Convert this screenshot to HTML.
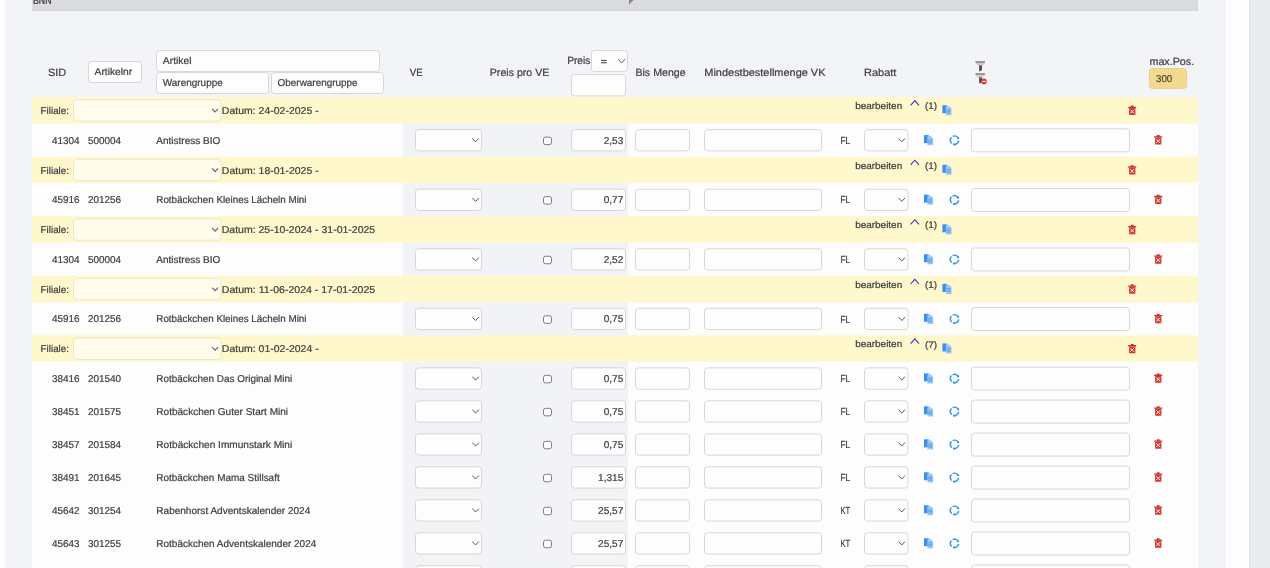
<!DOCTYPE html>
<html><head><meta charset="utf-8"><title>Preise</title>
<style>
html,body{margin:0;padding:0;width:1270px;height:568px;overflow:hidden;background:#f3f4f8;}
svg{display:block;will-change:transform;text-rendering:geometricPrecision;font-family:"Liberation Sans",sans-serif;}
</style></head><body>
<svg width="1270" height="568" viewBox="0 0 1270 568">
<rect x="0.00" y="0.00" width="1270.00" height="568.00" fill="#f3f4f8"/>
<rect x="0.00" y="0.00" width="5.00" height="568.00" fill="#fdfdfe"/>
<rect x="1226.00" y="0.00" width="23.00" height="568.00" fill="#fdfdfe"/>
<rect x="1249.00" y="0.00" width="21.00" height="568.00" fill="#eaebef"/>
<rect x="1249.00" y="0.00" width="1.00" height="568.00" fill="#e2e3e8"/>
<rect x="32.00" y="0.00" width="1166.00" height="11.00" fill="#dadbe0"/>
<rect x="32.00" y="10.00" width="1166.00" height="1.00" fill="#d4d5da"/>
<path d="M629 -1 L634.5 -1 L629 4.5 z" fill="#858585"/>
<text x="33.00" y="3.80" font-size="10.5" fill="#333" text-anchor="start" stroke="#333" stroke-width="0.22" textLength="18.50" lengthAdjust="spacingAndGlyphs">BNN</text>
<text x="48.00" y="76.20" font-size="10.5" fill="#414141" text-anchor="start" stroke="#414141" stroke-width="0.22" textLength="18.30" lengthAdjust="spacingAndGlyphs">SID</text>
<rect x="88.50" y="61.50" width="53.00" height="21.00" rx="3" fill="#fdfdfd" stroke="#d9d6d6" stroke-width="1"/>
<text x="94.60" y="75.00" font-size="10" fill="#414141" text-anchor="start" stroke="#414141" stroke-width="0.22" textLength="37.60" lengthAdjust="spacingAndGlyphs">Artikelnr</text>
<rect x="156.50" y="50.50" width="223.00" height="21.00" rx="3" fill="#fdfdfd" stroke="#d9d6d6" stroke-width="1"/>
<text x="162.80" y="64.00" font-size="10" fill="#414141" text-anchor="start" stroke="#414141" stroke-width="0.22" textLength="28.80" lengthAdjust="spacingAndGlyphs">Artikel</text>
<rect x="156.50" y="72.50" width="112.00" height="21.00" rx="3" fill="#fdfdfd" stroke="#d9d6d6" stroke-width="1"/>
<text x="162.80" y="86.00" font-size="10" fill="#414141" text-anchor="start" stroke="#414141" stroke-width="0.22" textLength="60.00" lengthAdjust="spacingAndGlyphs">Warengruppe</text>
<rect x="271.50" y="72.50" width="112.00" height="21.00" rx="3" fill="#fdfdfd" stroke="#d9d6d6" stroke-width="1"/>
<text x="277.60" y="86.00" font-size="10" fill="#414141" text-anchor="start" stroke="#414141" stroke-width="0.22" textLength="80.00" lengthAdjust="spacingAndGlyphs">Oberwarengruppe</text>
<text x="409.80" y="76.20" font-size="10.5" fill="#414141" text-anchor="start" stroke="#414141" stroke-width="0.22" textLength="12.90" lengthAdjust="spacingAndGlyphs">VE</text>
<text x="489.80" y="76.20" font-size="10.5" fill="#414141" text-anchor="start" stroke="#414141" stroke-width="0.22" textLength="59.50" lengthAdjust="spacingAndGlyphs">Preis pro VE</text>
<text x="567.20" y="64.20" font-size="10.5" fill="#414141" text-anchor="start" stroke="#414141" stroke-width="0.22" textLength="23.20" lengthAdjust="spacingAndGlyphs">Preis</text>
<rect x="591.50" y="50.50" width="36.00" height="21.00" rx="3" fill="#fdfdfd" stroke="#d9d6d6" stroke-width="1"/>
<rect x="601" y="59.9" width="5.6" height="1.1" fill="#4a4a4a"/><rect x="601" y="62.2" width="5.6" height="1.1" fill="#4a4a4a"/>
<path d="M618.20 59.00 L621.60 63.00 L625.00 59.00" fill="none" stroke="#666" stroke-width="1"/>
<rect x="571.50" y="74.50" width="54.00" height="21.40" rx="3" fill="#fdfdfd" stroke="#d9d6d6" stroke-width="1"/>
<text x="635.40" y="76.20" font-size="10.5" fill="#414141" text-anchor="start" stroke="#414141" stroke-width="0.22" textLength="50.30" lengthAdjust="spacingAndGlyphs">Bis Menge</text>
<text x="704.30" y="76.20" font-size="10.5" fill="#414141" text-anchor="start" stroke="#414141" stroke-width="0.22" textLength="121.20" lengthAdjust="spacingAndGlyphs">Mindestbestellmenge VK</text>
<text x="864.00" y="76.20" font-size="10.5" fill="#414141" text-anchor="start" stroke="#414141" stroke-width="0.22" textLength="32.40" lengthAdjust="spacingAndGlyphs">Rabatt</text>
<rect x="975.50" y="61.00" width="9.5" height="2" fill="#999"/>
<path d="M975.50 63.00 h9.5 l-3.2 3.2 h-3.1 z" fill="#c9c9c9"/>
<path d="M979.20 65.60 h2.7 v4.6 l-2.7 1.4 z" fill="#454545"/>
<rect x="975.50" y="73.00" width="9.5" height="2" fill="#999"/>
<path d="M975.50 75.00 h9.5 l-3.2 3.2 h-3.1 z" fill="#c9c9c9"/>
<path d="M979.20 77.60 h2.7 v4.6 l-2.7 1.4 z" fill="#454545"/>
<circle cx="983.9" cy="81.4" r="2.8" fill="#e8322d"/><rect x="982.2" y="80.9" width="3.4" height="1.1" fill="#fff"/>
<text x="1149.50" y="64.50" font-size="10.5" fill="#414141" text-anchor="start" stroke="#414141" stroke-width="0.22" textLength="44.60" lengthAdjust="spacingAndGlyphs">max.Pos.</text>
<rect x="1149.50" y="68.50" width="37.00" height="20.00" rx="3" fill="#f3da8f" stroke="#e8d291" stroke-width="1"/>
<text x="1156.00" y="81.70" font-size="10" fill="#4a4a3a" text-anchor="start" stroke="#4a4a3a" stroke-width="0.22" textLength="16.30" lengthAdjust="spacingAndGlyphs">300</text>
<rect x="32.00" y="97.00" width="1166.00" height="471.00" fill="#fdfdfe"/>
<rect x="403.00" y="97.00" width="225.00" height="471.00" fill="#f2f3f7"/>
<rect x="32.00" y="97.00" width="1166.00" height="26.60" fill="#fff8cd"/>
<text x="40.60" y="114.00" font-size="10" fill="#414141" text-anchor="start" stroke="#414141" stroke-width="0.22" textLength="28.40" lengthAdjust="spacingAndGlyphs">Filiale:</text>
<rect x="73.50" y="99.70" width="147.50" height="21.40" rx="3" fill="#fffcec" stroke="#ede6c6" stroke-width="1"/>
<path d="M212.10 108.85 L215.10 111.95 L218.10 108.85" fill="none" stroke="#6b6b6b" stroke-width="1.2"/>
<text x="221.80" y="114.00" font-size="10" fill="#414141" text-anchor="start" stroke="#414141" stroke-width="0.22" textLength="96.90" lengthAdjust="spacingAndGlyphs">Datum: 24-02-2025 -</text>
<text x="855.20" y="109.00" font-size="9.5" fill="#414141" text-anchor="start" stroke="#414141" stroke-width="0.22" textLength="47.00" lengthAdjust="spacingAndGlyphs">bearbeiten</text>
<path d="M910.6 105.30 L914.8 100.60 L919 105.30" fill="none" stroke="#3a2fc0" stroke-width="1.05"/>
<text x="924.90" y="109.30" font-size="9.5" fill="#414141" text-anchor="start" stroke="#414141" stroke-width="0.22" textLength="12.20" lengthAdjust="spacingAndGlyphs">(1)</text>
<rect x="942.40" y="105.20" width="4.8" height="8" fill="#3a8ff0"/>
<path d="M945.80 106.20 h3.4 l2.3 2.3 v6.8 h-5.7 z" fill="#9ac8f7"/>
<path d="M946.60 109.80 h4 M946.60 111.40 h4 M946.60 113.00 h4" stroke="#5a9de8" stroke-width="0.9"/>
<path d="M1128.20 106.80 h8 v1.3 h-8 z M1130.80 105.60 h2.8 v1.3 h-2.8 z" fill="#c8332b"/>
<path d="M1129.10 108.10 h6.3 v6.4 q0 0.5 -0.5 0.5 h-5.3 q-0.5 0 -0.5 -0.5 z" fill="#d2362c"/>
<path d="M1130.35 109.60 L1134.15 113.40 M1134.15 109.60 L1130.35 113.40" stroke="#fff" stroke-width="1"/>
<text x="79.60" y="143.60" font-size="10" fill="#414141" text-anchor="end" stroke="#414141" stroke-width="0.22" textLength="27.60" lengthAdjust="spacingAndGlyphs">41304</text>
<text x="87.90" y="143.60" font-size="10" fill="#414141" text-anchor="start" stroke="#414141" stroke-width="0.22" textLength="33.10" lengthAdjust="spacingAndGlyphs">500004</text>
<text x="156.30" y="143.60" font-size="10" fill="#414141" text-anchor="start" stroke="#414141" stroke-width="0.22" textLength="64.00" lengthAdjust="spacingAndGlyphs">Antistress BIO</text>
<rect x="415.50" y="129.60" width="66.00" height="21.30" rx="3" fill="#fdfdfd" stroke="#d9d6d6" stroke-width="1"/>
<path d="M472.35 138.35 L475.60 141.85 L478.85 138.35" fill="none" stroke="#5a5a5a" stroke-width="1"/>
<rect x="543.50" y="137.10" width="8.00" height="7.50" rx="2" fill="#fff" stroke="#7a7a7a" stroke-width="1"/>
<rect x="571.50" y="129.60" width="54.00" height="21.30" rx="3" fill="#fdfdfd" stroke="#d9d6d6" stroke-width="1"/>
<text x="623.30" y="143.60" font-size="10" fill="#414141" text-anchor="end" stroke="#414141" stroke-width="0.22" textLength="19.64" lengthAdjust="spacingAndGlyphs">2,53</text>
<rect x="635.50" y="129.60" width="54.00" height="21.30" rx="3" fill="#fdfdfd" stroke="#d9d6d6" stroke-width="1"/>
<rect x="704.50" y="129.60" width="117.00" height="21.30" rx="3" fill="#fdfdfd" stroke="#d9d6d6" stroke-width="1"/>
<text x="840.40" y="143.80" font-size="10.2" fill="#414141" text-anchor="start" stroke="#414141" stroke-width="0.22" textLength="9.80" lengthAdjust="spacingAndGlyphs">FL</text>
<rect x="864.50" y="129.60" width="43.50" height="21.30" rx="3" fill="#fdfdfd" stroke="#d9d6d6" stroke-width="1"/>
<path d="M898.55 138.35 L901.80 141.85 L905.05 138.35" fill="none" stroke="#5a5a5a" stroke-width="1"/>
<rect x="924.00" y="135.10" width="4.8" height="8" fill="#3a8ff0"/>
<path d="M927.40 136.10 h3.4 l2.3 2.3 v6.8 h-5.7 z" fill="#9ac8f7"/>
<path d="M928.20 139.70 h4 M928.20 141.30 h4 M928.20 142.90 h4" stroke="#5a9de8" stroke-width="0.9"/>
<circle cx="954.50" cy="140.20" r="4.20" fill="none" stroke="#3d97f0" stroke-width="1.5" stroke-dasharray="6.6 2.2" transform="rotate(-116 954.50 140.20)"/>
<circle cx="958.14" cy="138.10" r="1.05" fill="#2f8ef0"/>
<circle cx="953.92" cy="144.36" r="1.05" fill="#2f8ef0"/>
<rect x="971.50" y="128.85" width="158.00" height="23.00" rx="3" fill="#fdfdfd" stroke="#d9d6d6" stroke-width="1"/>
<path d="M1154.20 136.30 h8 v1.3 h-8 z M1156.80 135.10 h2.8 v1.3 h-2.8 z" fill="#c8332b"/>
<path d="M1155.10 137.60 h6.3 v6.4 q0 0.5 -0.5 0.5 h-5.3 q-0.5 0 -0.5 -0.5 z" fill="#d2362c"/>
<path d="M1156.35 139.10 L1160.15 142.90 M1160.15 139.10 L1156.35 142.90" stroke="#fff" stroke-width="1"/>
<rect x="32.00" y="156.57" width="1166.00" height="26.60" fill="#fff8cd"/>
<text x="40.60" y="173.57" font-size="10" fill="#414141" text-anchor="start" stroke="#414141" stroke-width="0.22" textLength="28.40" lengthAdjust="spacingAndGlyphs">Filiale:</text>
<rect x="73.50" y="159.27" width="147.50" height="21.40" rx="3" fill="#fffcec" stroke="#ede6c6" stroke-width="1"/>
<path d="M212.10 168.42 L215.10 171.52 L218.10 168.42" fill="none" stroke="#6b6b6b" stroke-width="1.2"/>
<text x="221.80" y="173.57" font-size="10" fill="#414141" text-anchor="start" stroke="#414141" stroke-width="0.22" textLength="96.90" lengthAdjust="spacingAndGlyphs">Datum: 18-01-2025 -</text>
<text x="855.20" y="168.57" font-size="9.5" fill="#414141" text-anchor="start" stroke="#414141" stroke-width="0.22" textLength="47.00" lengthAdjust="spacingAndGlyphs">bearbeiten</text>
<path d="M910.6 164.87 L914.8 160.17 L919 164.87" fill="none" stroke="#3a2fc0" stroke-width="1.05"/>
<text x="924.90" y="168.87" font-size="9.5" fill="#414141" text-anchor="start" stroke="#414141" stroke-width="0.22" textLength="12.20" lengthAdjust="spacingAndGlyphs">(1)</text>
<rect x="942.40" y="164.77" width="4.8" height="8" fill="#3a8ff0"/>
<path d="M945.80 165.77 h3.4 l2.3 2.3 v6.8 h-5.7 z" fill="#9ac8f7"/>
<path d="M946.60 169.37 h4 M946.60 170.97 h4 M946.60 172.57 h4" stroke="#5a9de8" stroke-width="0.9"/>
<path d="M1128.20 166.37 h8 v1.3 h-8 z M1130.80 165.17 h2.8 v1.3 h-2.8 z" fill="#c8332b"/>
<path d="M1129.10 167.67 h6.3 v6.4 q0 0.5 -0.5 0.5 h-5.3 q-0.5 0 -0.5 -0.5 z" fill="#d2362c"/>
<path d="M1130.35 169.17 L1134.15 172.97 M1134.15 169.17 L1130.35 172.97" stroke="#fff" stroke-width="1"/>
<text x="79.60" y="203.17" font-size="10" fill="#414141" text-anchor="end" stroke="#414141" stroke-width="0.22" textLength="27.60" lengthAdjust="spacingAndGlyphs">45916</text>
<text x="87.90" y="203.17" font-size="10" fill="#414141" text-anchor="start" stroke="#414141" stroke-width="0.22" textLength="33.10" lengthAdjust="spacingAndGlyphs">201256</text>
<text x="156.30" y="203.17" font-size="10" fill="#414141" text-anchor="start" stroke="#414141" stroke-width="0.22" textLength="150.22" lengthAdjust="spacingAndGlyphs">Rotbäckchen Kleines Lächeln Mini</text>
<rect x="415.50" y="189.17" width="66.00" height="21.30" rx="3" fill="#fdfdfd" stroke="#d9d6d6" stroke-width="1"/>
<path d="M472.35 197.92 L475.60 201.42 L478.85 197.92" fill="none" stroke="#5a5a5a" stroke-width="1"/>
<rect x="543.50" y="196.67" width="8.00" height="7.50" rx="2" fill="#fff" stroke="#7a7a7a" stroke-width="1"/>
<rect x="571.50" y="189.17" width="54.00" height="21.30" rx="3" fill="#fdfdfd" stroke="#d9d6d6" stroke-width="1"/>
<text x="623.30" y="203.17" font-size="10" fill="#414141" text-anchor="end" stroke="#414141" stroke-width="0.22" textLength="19.64" lengthAdjust="spacingAndGlyphs">0,77</text>
<rect x="635.50" y="189.17" width="54.00" height="21.30" rx="3" fill="#fdfdfd" stroke="#d9d6d6" stroke-width="1"/>
<rect x="704.50" y="189.17" width="117.00" height="21.30" rx="3" fill="#fdfdfd" stroke="#d9d6d6" stroke-width="1"/>
<text x="840.40" y="203.37" font-size="10.2" fill="#414141" text-anchor="start" stroke="#414141" stroke-width="0.22" textLength="9.80" lengthAdjust="spacingAndGlyphs">FL</text>
<rect x="864.50" y="189.17" width="43.50" height="21.30" rx="3" fill="#fdfdfd" stroke="#d9d6d6" stroke-width="1"/>
<path d="M898.55 197.92 L901.80 201.42 L905.05 197.92" fill="none" stroke="#5a5a5a" stroke-width="1"/>
<rect x="924.00" y="194.67" width="4.8" height="8" fill="#3a8ff0"/>
<path d="M927.40 195.67 h3.4 l2.3 2.3 v6.8 h-5.7 z" fill="#9ac8f7"/>
<path d="M928.20 199.27 h4 M928.20 200.87 h4 M928.20 202.47 h4" stroke="#5a9de8" stroke-width="0.9"/>
<circle cx="954.50" cy="199.77" r="4.20" fill="none" stroke="#3d97f0" stroke-width="1.5" stroke-dasharray="6.6 2.2" transform="rotate(-116 954.50 199.77)"/>
<circle cx="958.14" cy="197.67" r="1.05" fill="#2f8ef0"/>
<circle cx="953.92" cy="203.93" r="1.05" fill="#2f8ef0"/>
<rect x="971.50" y="188.42" width="158.00" height="23.00" rx="3" fill="#fdfdfd" stroke="#d9d6d6" stroke-width="1"/>
<path d="M1154.20 195.87 h8 v1.3 h-8 z M1156.80 194.67 h2.8 v1.3 h-2.8 z" fill="#c8332b"/>
<path d="M1155.10 197.17 h6.3 v6.4 q0 0.5 -0.5 0.5 h-5.3 q-0.5 0 -0.5 -0.5 z" fill="#d2362c"/>
<path d="M1156.35 198.67 L1160.15 202.47 M1160.15 198.67 L1156.35 202.47" stroke="#fff" stroke-width="1"/>
<rect x="32.00" y="216.14" width="1166.00" height="26.60" fill="#fff8cd"/>
<text x="40.60" y="233.14" font-size="10" fill="#414141" text-anchor="start" stroke="#414141" stroke-width="0.22" textLength="28.40" lengthAdjust="spacingAndGlyphs">Filiale:</text>
<rect x="73.50" y="218.84" width="147.50" height="21.40" rx="3" fill="#fffcec" stroke="#ede6c6" stroke-width="1"/>
<path d="M212.10 227.99 L215.10 231.09 L218.10 227.99" fill="none" stroke="#6b6b6b" stroke-width="1.2"/>
<text x="221.80" y="233.14" font-size="10" fill="#414141" text-anchor="start" stroke="#414141" stroke-width="0.22" textLength="153.40" lengthAdjust="spacingAndGlyphs">Datum: 25-10-2024 - 31-01-2025</text>
<text x="855.20" y="228.14" font-size="9.5" fill="#414141" text-anchor="start" stroke="#414141" stroke-width="0.22" textLength="47.00" lengthAdjust="spacingAndGlyphs">bearbeiten</text>
<path d="M910.6 224.44 L914.8 219.74 L919 224.44" fill="none" stroke="#3a2fc0" stroke-width="1.05"/>
<text x="924.90" y="228.44" font-size="9.5" fill="#414141" text-anchor="start" stroke="#414141" stroke-width="0.22" textLength="12.20" lengthAdjust="spacingAndGlyphs">(1)</text>
<rect x="942.40" y="224.34" width="4.8" height="8" fill="#3a8ff0"/>
<path d="M945.80 225.34 h3.4 l2.3 2.3 v6.8 h-5.7 z" fill="#9ac8f7"/>
<path d="M946.60 228.94 h4 M946.60 230.54 h4 M946.60 232.14 h4" stroke="#5a9de8" stroke-width="0.9"/>
<path d="M1128.20 225.94 h8 v1.3 h-8 z M1130.80 224.74 h2.8 v1.3 h-2.8 z" fill="#c8332b"/>
<path d="M1129.10 227.24 h6.3 v6.4 q0 0.5 -0.5 0.5 h-5.3 q-0.5 0 -0.5 -0.5 z" fill="#d2362c"/>
<path d="M1130.35 228.74 L1134.15 232.54 M1134.15 228.74 L1130.35 232.54" stroke="#fff" stroke-width="1"/>
<text x="79.60" y="262.74" font-size="10" fill="#414141" text-anchor="end" stroke="#414141" stroke-width="0.22" textLength="27.60" lengthAdjust="spacingAndGlyphs">41304</text>
<text x="87.90" y="262.74" font-size="10" fill="#414141" text-anchor="start" stroke="#414141" stroke-width="0.22" textLength="33.10" lengthAdjust="spacingAndGlyphs">500004</text>
<text x="156.30" y="262.74" font-size="10" fill="#414141" text-anchor="start" stroke="#414141" stroke-width="0.22" textLength="64.00" lengthAdjust="spacingAndGlyphs">Antistress BIO</text>
<rect x="415.50" y="248.74" width="66.00" height="21.30" rx="3" fill="#fdfdfd" stroke="#d9d6d6" stroke-width="1"/>
<path d="M472.35 257.49 L475.60 260.99 L478.85 257.49" fill="none" stroke="#5a5a5a" stroke-width="1"/>
<rect x="543.50" y="256.24" width="8.00" height="7.50" rx="2" fill="#fff" stroke="#7a7a7a" stroke-width="1"/>
<rect x="571.50" y="248.74" width="54.00" height="21.30" rx="3" fill="#fdfdfd" stroke="#d9d6d6" stroke-width="1"/>
<text x="623.30" y="262.74" font-size="10" fill="#414141" text-anchor="end" stroke="#414141" stroke-width="0.22" textLength="19.64" lengthAdjust="spacingAndGlyphs">2,52</text>
<rect x="635.50" y="248.74" width="54.00" height="21.30" rx="3" fill="#fdfdfd" stroke="#d9d6d6" stroke-width="1"/>
<rect x="704.50" y="248.74" width="117.00" height="21.30" rx="3" fill="#fdfdfd" stroke="#d9d6d6" stroke-width="1"/>
<text x="840.40" y="262.94" font-size="10.2" fill="#414141" text-anchor="start" stroke="#414141" stroke-width="0.22" textLength="9.80" lengthAdjust="spacingAndGlyphs">FL</text>
<rect x="864.50" y="248.74" width="43.50" height="21.30" rx="3" fill="#fdfdfd" stroke="#d9d6d6" stroke-width="1"/>
<path d="M898.55 257.49 L901.80 260.99 L905.05 257.49" fill="none" stroke="#5a5a5a" stroke-width="1"/>
<rect x="924.00" y="254.24" width="4.8" height="8" fill="#3a8ff0"/>
<path d="M927.40 255.24 h3.4 l2.3 2.3 v6.8 h-5.7 z" fill="#9ac8f7"/>
<path d="M928.20 258.84 h4 M928.20 260.44 h4 M928.20 262.04 h4" stroke="#5a9de8" stroke-width="0.9"/>
<circle cx="954.50" cy="259.34" r="4.20" fill="none" stroke="#3d97f0" stroke-width="1.5" stroke-dasharray="6.6 2.2" transform="rotate(-116 954.50 259.34)"/>
<circle cx="958.14" cy="257.24" r="1.05" fill="#2f8ef0"/>
<circle cx="953.92" cy="263.50" r="1.05" fill="#2f8ef0"/>
<rect x="971.50" y="247.99" width="158.00" height="23.00" rx="3" fill="#fdfdfd" stroke="#d9d6d6" stroke-width="1"/>
<path d="M1154.20 255.44 h8 v1.3 h-8 z M1156.80 254.24 h2.8 v1.3 h-2.8 z" fill="#c8332b"/>
<path d="M1155.10 256.74 h6.3 v6.4 q0 0.5 -0.5 0.5 h-5.3 q-0.5 0 -0.5 -0.5 z" fill="#d2362c"/>
<path d="M1156.35 258.24 L1160.15 262.04 M1160.15 258.24 L1156.35 262.04" stroke="#fff" stroke-width="1"/>
<rect x="32.00" y="275.71" width="1166.00" height="26.60" fill="#fff8cd"/>
<text x="40.60" y="292.71" font-size="10" fill="#414141" text-anchor="start" stroke="#414141" stroke-width="0.22" textLength="28.40" lengthAdjust="spacingAndGlyphs">Filiale:</text>
<rect x="73.50" y="278.41" width="147.50" height="21.40" rx="3" fill="#fffcec" stroke="#ede6c6" stroke-width="1"/>
<path d="M212.10 287.56 L215.10 290.66 L218.10 287.56" fill="none" stroke="#6b6b6b" stroke-width="1.2"/>
<text x="221.80" y="292.71" font-size="10" fill="#414141" text-anchor="start" stroke="#414141" stroke-width="0.22" textLength="153.40" lengthAdjust="spacingAndGlyphs">Datum: 11-06-2024 - 17-01-2025</text>
<text x="855.20" y="287.71" font-size="9.5" fill="#414141" text-anchor="start" stroke="#414141" stroke-width="0.22" textLength="47.00" lengthAdjust="spacingAndGlyphs">bearbeiten</text>
<path d="M910.6 284.01 L914.8 279.31 L919 284.01" fill="none" stroke="#3a2fc0" stroke-width="1.05"/>
<text x="924.90" y="288.01" font-size="9.5" fill="#414141" text-anchor="start" stroke="#414141" stroke-width="0.22" textLength="12.20" lengthAdjust="spacingAndGlyphs">(1)</text>
<rect x="942.40" y="283.91" width="4.8" height="8" fill="#3a8ff0"/>
<path d="M945.80 284.91 h3.4 l2.3 2.3 v6.8 h-5.7 z" fill="#9ac8f7"/>
<path d="M946.60 288.51 h4 M946.60 290.11 h4 M946.60 291.71 h4" stroke="#5a9de8" stroke-width="0.9"/>
<path d="M1128.20 285.51 h8 v1.3 h-8 z M1130.80 284.31 h2.8 v1.3 h-2.8 z" fill="#c8332b"/>
<path d="M1129.10 286.81 h6.3 v6.4 q0 0.5 -0.5 0.5 h-5.3 q-0.5 0 -0.5 -0.5 z" fill="#d2362c"/>
<path d="M1130.35 288.31 L1134.15 292.11 M1134.15 288.31 L1130.35 292.11" stroke="#fff" stroke-width="1"/>
<text x="79.60" y="322.31" font-size="10" fill="#414141" text-anchor="end" stroke="#414141" stroke-width="0.22" textLength="27.60" lengthAdjust="spacingAndGlyphs">45916</text>
<text x="87.90" y="322.31" font-size="10" fill="#414141" text-anchor="start" stroke="#414141" stroke-width="0.22" textLength="33.10" lengthAdjust="spacingAndGlyphs">201256</text>
<text x="156.30" y="322.31" font-size="10" fill="#414141" text-anchor="start" stroke="#414141" stroke-width="0.22" textLength="150.22" lengthAdjust="spacingAndGlyphs">Rotbäckchen Kleines Lächeln Mini</text>
<rect x="415.50" y="308.31" width="66.00" height="21.30" rx="3" fill="#fdfdfd" stroke="#d9d6d6" stroke-width="1"/>
<path d="M472.35 317.06 L475.60 320.56 L478.85 317.06" fill="none" stroke="#5a5a5a" stroke-width="1"/>
<rect x="543.50" y="315.81" width="8.00" height="7.50" rx="2" fill="#fff" stroke="#7a7a7a" stroke-width="1"/>
<rect x="571.50" y="308.31" width="54.00" height="21.30" rx="3" fill="#fdfdfd" stroke="#d9d6d6" stroke-width="1"/>
<text x="623.30" y="322.31" font-size="10" fill="#414141" text-anchor="end" stroke="#414141" stroke-width="0.22" textLength="19.64" lengthAdjust="spacingAndGlyphs">0,75</text>
<rect x="635.50" y="308.31" width="54.00" height="21.30" rx="3" fill="#fdfdfd" stroke="#d9d6d6" stroke-width="1"/>
<rect x="704.50" y="308.31" width="117.00" height="21.30" rx="3" fill="#fdfdfd" stroke="#d9d6d6" stroke-width="1"/>
<text x="840.40" y="322.51" font-size="10.2" fill="#414141" text-anchor="start" stroke="#414141" stroke-width="0.22" textLength="9.80" lengthAdjust="spacingAndGlyphs">FL</text>
<rect x="864.50" y="308.31" width="43.50" height="21.30" rx="3" fill="#fdfdfd" stroke="#d9d6d6" stroke-width="1"/>
<path d="M898.55 317.06 L901.80 320.56 L905.05 317.06" fill="none" stroke="#5a5a5a" stroke-width="1"/>
<rect x="924.00" y="313.81" width="4.8" height="8" fill="#3a8ff0"/>
<path d="M927.40 314.81 h3.4 l2.3 2.3 v6.8 h-5.7 z" fill="#9ac8f7"/>
<path d="M928.20 318.41 h4 M928.20 320.01 h4 M928.20 321.61 h4" stroke="#5a9de8" stroke-width="0.9"/>
<circle cx="954.50" cy="318.91" r="4.20" fill="none" stroke="#3d97f0" stroke-width="1.5" stroke-dasharray="6.6 2.2" transform="rotate(-116 954.50 318.91)"/>
<circle cx="958.14" cy="316.81" r="1.05" fill="#2f8ef0"/>
<circle cx="953.92" cy="323.07" r="1.05" fill="#2f8ef0"/>
<rect x="971.50" y="307.56" width="158.00" height="23.00" rx="3" fill="#fdfdfd" stroke="#d9d6d6" stroke-width="1"/>
<path d="M1154.20 315.01 h8 v1.3 h-8 z M1156.80 313.81 h2.8 v1.3 h-2.8 z" fill="#c8332b"/>
<path d="M1155.10 316.31 h6.3 v6.4 q0 0.5 -0.5 0.5 h-5.3 q-0.5 0 -0.5 -0.5 z" fill="#d2362c"/>
<path d="M1156.35 317.81 L1160.15 321.61 M1160.15 317.81 L1156.35 321.61" stroke="#fff" stroke-width="1"/>
<rect x="32.00" y="335.28" width="1166.00" height="26.60" fill="#fff8cd"/>
<text x="40.60" y="352.28" font-size="10" fill="#414141" text-anchor="start" stroke="#414141" stroke-width="0.22" textLength="28.40" lengthAdjust="spacingAndGlyphs">Filiale:</text>
<rect x="73.50" y="337.98" width="147.50" height="21.40" rx="3" fill="#fffcec" stroke="#ede6c6" stroke-width="1"/>
<path d="M212.10 347.13 L215.10 350.23 L218.10 347.13" fill="none" stroke="#6b6b6b" stroke-width="1.2"/>
<text x="221.80" y="352.28" font-size="10" fill="#414141" text-anchor="start" stroke="#414141" stroke-width="0.22" textLength="96.90" lengthAdjust="spacingAndGlyphs">Datum: 01-02-2024 -</text>
<text x="855.20" y="347.28" font-size="9.5" fill="#414141" text-anchor="start" stroke="#414141" stroke-width="0.22" textLength="47.00" lengthAdjust="spacingAndGlyphs">bearbeiten</text>
<path d="M910.6 343.58 L914.8 338.88 L919 343.58" fill="none" stroke="#3a2fc0" stroke-width="1.05"/>
<text x="924.90" y="347.58" font-size="9.5" fill="#414141" text-anchor="start" stroke="#414141" stroke-width="0.22" textLength="12.20" lengthAdjust="spacingAndGlyphs">(7)</text>
<rect x="942.40" y="343.48" width="4.8" height="8" fill="#3a8ff0"/>
<path d="M945.80 344.48 h3.4 l2.3 2.3 v6.8 h-5.7 z" fill="#9ac8f7"/>
<path d="M946.60 348.08 h4 M946.60 349.68 h4 M946.60 351.28 h4" stroke="#5a9de8" stroke-width="0.9"/>
<path d="M1128.20 345.08 h8 v1.3 h-8 z M1130.80 343.88 h2.8 v1.3 h-2.8 z" fill="#c8332b"/>
<path d="M1129.10 346.38 h6.3 v6.4 q0 0.5 -0.5 0.5 h-5.3 q-0.5 0 -0.5 -0.5 z" fill="#d2362c"/>
<path d="M1130.35 347.88 L1134.15 351.68 M1134.15 347.88 L1130.35 351.68" stroke="#fff" stroke-width="1"/>
<text x="79.60" y="381.88" font-size="10" fill="#414141" text-anchor="end" stroke="#414141" stroke-width="0.22" textLength="27.60" lengthAdjust="spacingAndGlyphs">38416</text>
<text x="87.90" y="381.88" font-size="10" fill="#414141" text-anchor="start" stroke="#414141" stroke-width="0.22" textLength="33.10" lengthAdjust="spacingAndGlyphs">201540</text>
<text x="156.30" y="381.88" font-size="10" fill="#414141" text-anchor="start" stroke="#414141" stroke-width="0.22" textLength="135.90" lengthAdjust="spacingAndGlyphs">Rotbäckchen Das Original Mini</text>
<rect x="415.50" y="367.88" width="66.00" height="21.30" rx="3" fill="#fdfdfd" stroke="#d9d6d6" stroke-width="1"/>
<path d="M472.35 376.63 L475.60 380.13 L478.85 376.63" fill="none" stroke="#5a5a5a" stroke-width="1"/>
<rect x="543.50" y="375.38" width="8.00" height="7.50" rx="2" fill="#fff" stroke="#7a7a7a" stroke-width="1"/>
<rect x="571.50" y="367.88" width="54.00" height="21.30" rx="3" fill="#fdfdfd" stroke="#d9d6d6" stroke-width="1"/>
<text x="623.30" y="381.88" font-size="10" fill="#414141" text-anchor="end" stroke="#414141" stroke-width="0.22" textLength="19.64" lengthAdjust="spacingAndGlyphs">0,75</text>
<rect x="635.50" y="367.88" width="54.00" height="21.30" rx="3" fill="#fdfdfd" stroke="#d9d6d6" stroke-width="1"/>
<rect x="704.50" y="367.88" width="117.00" height="21.30" rx="3" fill="#fdfdfd" stroke="#d9d6d6" stroke-width="1"/>
<text x="840.40" y="382.08" font-size="10.2" fill="#414141" text-anchor="start" stroke="#414141" stroke-width="0.22" textLength="9.80" lengthAdjust="spacingAndGlyphs">FL</text>
<rect x="864.50" y="367.88" width="43.50" height="21.30" rx="3" fill="#fdfdfd" stroke="#d9d6d6" stroke-width="1"/>
<path d="M898.55 376.63 L901.80 380.13 L905.05 376.63" fill="none" stroke="#5a5a5a" stroke-width="1"/>
<rect x="924.00" y="373.38" width="4.8" height="8" fill="#3a8ff0"/>
<path d="M927.40 374.38 h3.4 l2.3 2.3 v6.8 h-5.7 z" fill="#9ac8f7"/>
<path d="M928.20 377.98 h4 M928.20 379.58 h4 M928.20 381.18 h4" stroke="#5a9de8" stroke-width="0.9"/>
<circle cx="954.50" cy="378.48" r="4.20" fill="none" stroke="#3d97f0" stroke-width="1.5" stroke-dasharray="6.6 2.2" transform="rotate(-116 954.50 378.48)"/>
<circle cx="958.14" cy="376.38" r="1.05" fill="#2f8ef0"/>
<circle cx="953.92" cy="382.64" r="1.05" fill="#2f8ef0"/>
<rect x="971.50" y="367.13" width="158.00" height="23.00" rx="3" fill="#fdfdfd" stroke="#d9d6d6" stroke-width="1"/>
<path d="M1154.20 374.58 h8 v1.3 h-8 z M1156.80 373.38 h2.8 v1.3 h-2.8 z" fill="#c8332b"/>
<path d="M1155.10 375.88 h6.3 v6.4 q0 0.5 -0.5 0.5 h-5.3 q-0.5 0 -0.5 -0.5 z" fill="#d2362c"/>
<path d="M1156.35 377.38 L1160.15 381.18 M1160.15 377.38 L1156.35 381.18" stroke="#fff" stroke-width="1"/>
<text x="79.60" y="414.85" font-size="10" fill="#414141" text-anchor="end" stroke="#414141" stroke-width="0.22" textLength="27.60" lengthAdjust="spacingAndGlyphs">38451</text>
<text x="87.90" y="414.85" font-size="10" fill="#414141" text-anchor="start" stroke="#414141" stroke-width="0.22" textLength="33.10" lengthAdjust="spacingAndGlyphs">201575</text>
<text x="156.30" y="414.85" font-size="10" fill="#414141" text-anchor="start" stroke="#414141" stroke-width="0.22" textLength="131.80" lengthAdjust="spacingAndGlyphs">Rotbäckchen Guter Start Mini</text>
<rect x="415.50" y="400.85" width="66.00" height="21.30" rx="3" fill="#fdfdfd" stroke="#d9d6d6" stroke-width="1"/>
<path d="M472.35 409.60 L475.60 413.10 L478.85 409.60" fill="none" stroke="#5a5a5a" stroke-width="1"/>
<rect x="543.50" y="408.35" width="8.00" height="7.50" rx="2" fill="#fff" stroke="#7a7a7a" stroke-width="1"/>
<rect x="571.50" y="400.85" width="54.00" height="21.30" rx="3" fill="#fdfdfd" stroke="#d9d6d6" stroke-width="1"/>
<text x="623.30" y="414.85" font-size="10" fill="#414141" text-anchor="end" stroke="#414141" stroke-width="0.22" textLength="19.64" lengthAdjust="spacingAndGlyphs">0,75</text>
<rect x="635.50" y="400.85" width="54.00" height="21.30" rx="3" fill="#fdfdfd" stroke="#d9d6d6" stroke-width="1"/>
<rect x="704.50" y="400.85" width="117.00" height="21.30" rx="3" fill="#fdfdfd" stroke="#d9d6d6" stroke-width="1"/>
<text x="840.40" y="415.05" font-size="10.2" fill="#414141" text-anchor="start" stroke="#414141" stroke-width="0.22" textLength="9.80" lengthAdjust="spacingAndGlyphs">FL</text>
<rect x="864.50" y="400.85" width="43.50" height="21.30" rx="3" fill="#fdfdfd" stroke="#d9d6d6" stroke-width="1"/>
<path d="M898.55 409.60 L901.80 413.10 L905.05 409.60" fill="none" stroke="#5a5a5a" stroke-width="1"/>
<rect x="924.00" y="406.35" width="4.8" height="8" fill="#3a8ff0"/>
<path d="M927.40 407.35 h3.4 l2.3 2.3 v6.8 h-5.7 z" fill="#9ac8f7"/>
<path d="M928.20 410.95 h4 M928.20 412.55 h4 M928.20 414.15 h4" stroke="#5a9de8" stroke-width="0.9"/>
<circle cx="954.50" cy="411.45" r="4.20" fill="none" stroke="#3d97f0" stroke-width="1.5" stroke-dasharray="6.6 2.2" transform="rotate(-116 954.50 411.45)"/>
<circle cx="958.14" cy="409.35" r="1.05" fill="#2f8ef0"/>
<circle cx="953.92" cy="415.61" r="1.05" fill="#2f8ef0"/>
<rect x="971.50" y="400.10" width="158.00" height="23.00" rx="3" fill="#fdfdfd" stroke="#d9d6d6" stroke-width="1"/>
<path d="M1154.20 407.55 h8 v1.3 h-8 z M1156.80 406.35 h2.8 v1.3 h-2.8 z" fill="#c8332b"/>
<path d="M1155.10 408.85 h6.3 v6.4 q0 0.5 -0.5 0.5 h-5.3 q-0.5 0 -0.5 -0.5 z" fill="#d2362c"/>
<path d="M1156.35 410.35 L1160.15 414.15 M1160.15 410.35 L1156.35 414.15" stroke="#fff" stroke-width="1"/>
<text x="79.60" y="447.82" font-size="10" fill="#414141" text-anchor="end" stroke="#414141" stroke-width="0.22" textLength="27.60" lengthAdjust="spacingAndGlyphs">38457</text>
<text x="87.90" y="447.82" font-size="10" fill="#414141" text-anchor="start" stroke="#414141" stroke-width="0.22" textLength="33.10" lengthAdjust="spacingAndGlyphs">201584</text>
<text x="156.30" y="447.82" font-size="10" fill="#414141" text-anchor="start" stroke="#414141" stroke-width="0.22" textLength="135.90" lengthAdjust="spacingAndGlyphs">Rotbäckchen Immunstark Mini</text>
<rect x="415.50" y="433.82" width="66.00" height="21.30" rx="3" fill="#fdfdfd" stroke="#d9d6d6" stroke-width="1"/>
<path d="M472.35 442.57 L475.60 446.07 L478.85 442.57" fill="none" stroke="#5a5a5a" stroke-width="1"/>
<rect x="543.50" y="441.32" width="8.00" height="7.50" rx="2" fill="#fff" stroke="#7a7a7a" stroke-width="1"/>
<rect x="571.50" y="433.82" width="54.00" height="21.30" rx="3" fill="#fdfdfd" stroke="#d9d6d6" stroke-width="1"/>
<text x="623.30" y="447.82" font-size="10" fill="#414141" text-anchor="end" stroke="#414141" stroke-width="0.22" textLength="19.64" lengthAdjust="spacingAndGlyphs">0,75</text>
<rect x="635.50" y="433.82" width="54.00" height="21.30" rx="3" fill="#fdfdfd" stroke="#d9d6d6" stroke-width="1"/>
<rect x="704.50" y="433.82" width="117.00" height="21.30" rx="3" fill="#fdfdfd" stroke="#d9d6d6" stroke-width="1"/>
<text x="840.40" y="448.02" font-size="10.2" fill="#414141" text-anchor="start" stroke="#414141" stroke-width="0.22" textLength="9.80" lengthAdjust="spacingAndGlyphs">FL</text>
<rect x="864.50" y="433.82" width="43.50" height="21.30" rx="3" fill="#fdfdfd" stroke="#d9d6d6" stroke-width="1"/>
<path d="M898.55 442.57 L901.80 446.07 L905.05 442.57" fill="none" stroke="#5a5a5a" stroke-width="1"/>
<rect x="924.00" y="439.32" width="4.8" height="8" fill="#3a8ff0"/>
<path d="M927.40 440.32 h3.4 l2.3 2.3 v6.8 h-5.7 z" fill="#9ac8f7"/>
<path d="M928.20 443.92 h4 M928.20 445.52 h4 M928.20 447.12 h4" stroke="#5a9de8" stroke-width="0.9"/>
<circle cx="954.50" cy="444.42" r="4.20" fill="none" stroke="#3d97f0" stroke-width="1.5" stroke-dasharray="6.6 2.2" transform="rotate(-116 954.50 444.42)"/>
<circle cx="958.14" cy="442.32" r="1.05" fill="#2f8ef0"/>
<circle cx="953.92" cy="448.58" r="1.05" fill="#2f8ef0"/>
<rect x="971.50" y="433.07" width="158.00" height="23.00" rx="3" fill="#fdfdfd" stroke="#d9d6d6" stroke-width="1"/>
<path d="M1154.20 440.52 h8 v1.3 h-8 z M1156.80 439.32 h2.8 v1.3 h-2.8 z" fill="#c8332b"/>
<path d="M1155.10 441.82 h6.3 v6.4 q0 0.5 -0.5 0.5 h-5.3 q-0.5 0 -0.5 -0.5 z" fill="#d2362c"/>
<path d="M1156.35 443.32 L1160.15 447.12 M1160.15 443.32 L1156.35 447.12" stroke="#fff" stroke-width="1"/>
<text x="79.60" y="480.79" font-size="10" fill="#414141" text-anchor="end" stroke="#414141" stroke-width="0.22" textLength="27.60" lengthAdjust="spacingAndGlyphs">38491</text>
<text x="87.90" y="480.79" font-size="10" fill="#414141" text-anchor="start" stroke="#414141" stroke-width="0.22" textLength="33.10" lengthAdjust="spacingAndGlyphs">201645</text>
<text x="156.30" y="480.79" font-size="10" fill="#414141" text-anchor="start" stroke="#414141" stroke-width="0.22" textLength="123.40" lengthAdjust="spacingAndGlyphs">Rotbäckchen Mama Stillsaft</text>
<rect x="415.50" y="466.79" width="66.00" height="21.30" rx="3" fill="#fdfdfd" stroke="#d9d6d6" stroke-width="1"/>
<path d="M472.35 475.54 L475.60 479.04 L478.85 475.54" fill="none" stroke="#5a5a5a" stroke-width="1"/>
<rect x="543.50" y="474.29" width="8.00" height="7.50" rx="2" fill="#fff" stroke="#7a7a7a" stroke-width="1"/>
<rect x="571.50" y="466.79" width="54.00" height="21.30" rx="3" fill="#fdfdfd" stroke="#d9d6d6" stroke-width="1"/>
<text x="623.30" y="480.79" font-size="10" fill="#414141" text-anchor="end" stroke="#414141" stroke-width="0.22" textLength="25.25" lengthAdjust="spacingAndGlyphs">1,315</text>
<rect x="635.50" y="466.79" width="54.00" height="21.30" rx="3" fill="#fdfdfd" stroke="#d9d6d6" stroke-width="1"/>
<rect x="704.50" y="466.79" width="117.00" height="21.30" rx="3" fill="#fdfdfd" stroke="#d9d6d6" stroke-width="1"/>
<text x="840.40" y="480.99" font-size="10.2" fill="#414141" text-anchor="start" stroke="#414141" stroke-width="0.22" textLength="9.80" lengthAdjust="spacingAndGlyphs">FL</text>
<rect x="864.50" y="466.79" width="43.50" height="21.30" rx="3" fill="#fdfdfd" stroke="#d9d6d6" stroke-width="1"/>
<path d="M898.55 475.54 L901.80 479.04 L905.05 475.54" fill="none" stroke="#5a5a5a" stroke-width="1"/>
<rect x="924.00" y="472.29" width="4.8" height="8" fill="#3a8ff0"/>
<path d="M927.40 473.29 h3.4 l2.3 2.3 v6.8 h-5.7 z" fill="#9ac8f7"/>
<path d="M928.20 476.89 h4 M928.20 478.49 h4 M928.20 480.09 h4" stroke="#5a9de8" stroke-width="0.9"/>
<circle cx="954.50" cy="477.39" r="4.20" fill="none" stroke="#3d97f0" stroke-width="1.5" stroke-dasharray="6.6 2.2" transform="rotate(-116 954.50 477.39)"/>
<circle cx="958.14" cy="475.29" r="1.05" fill="#2f8ef0"/>
<circle cx="953.92" cy="481.55" r="1.05" fill="#2f8ef0"/>
<rect x="971.50" y="466.04" width="158.00" height="23.00" rx="3" fill="#fdfdfd" stroke="#d9d6d6" stroke-width="1"/>
<path d="M1154.20 473.49 h8 v1.3 h-8 z M1156.80 472.29 h2.8 v1.3 h-2.8 z" fill="#c8332b"/>
<path d="M1155.10 474.79 h6.3 v6.4 q0 0.5 -0.5 0.5 h-5.3 q-0.5 0 -0.5 -0.5 z" fill="#d2362c"/>
<path d="M1156.35 476.29 L1160.15 480.09 M1160.15 476.29 L1156.35 480.09" stroke="#fff" stroke-width="1"/>
<text x="79.60" y="513.76" font-size="10" fill="#414141" text-anchor="end" stroke="#414141" stroke-width="0.22" textLength="27.60" lengthAdjust="spacingAndGlyphs">45642</text>
<text x="87.90" y="513.76" font-size="10" fill="#414141" text-anchor="start" stroke="#414141" stroke-width="0.22" textLength="33.10" lengthAdjust="spacingAndGlyphs">301254</text>
<text x="156.30" y="513.76" font-size="10" fill="#414141" text-anchor="start" stroke="#414141" stroke-width="0.22" textLength="154.00" lengthAdjust="spacingAndGlyphs">Rabenhorst Adventskalender 2024</text>
<rect x="415.50" y="499.76" width="66.00" height="21.30" rx="3" fill="#fdfdfd" stroke="#d9d6d6" stroke-width="1"/>
<path d="M472.35 508.51 L475.60 512.01 L478.85 508.51" fill="none" stroke="#5a5a5a" stroke-width="1"/>
<rect x="543.50" y="507.26" width="8.00" height="7.50" rx="2" fill="#fff" stroke="#7a7a7a" stroke-width="1"/>
<rect x="571.50" y="499.76" width="54.00" height="21.30" rx="3" fill="#fdfdfd" stroke="#d9d6d6" stroke-width="1"/>
<text x="623.30" y="513.76" font-size="10" fill="#414141" text-anchor="end" stroke="#414141" stroke-width="0.22" textLength="25.25" lengthAdjust="spacingAndGlyphs">25,57</text>
<rect x="635.50" y="499.76" width="54.00" height="21.30" rx="3" fill="#fdfdfd" stroke="#d9d6d6" stroke-width="1"/>
<rect x="704.50" y="499.76" width="117.00" height="21.30" rx="3" fill="#fdfdfd" stroke="#d9d6d6" stroke-width="1"/>
<text x="840.40" y="513.96" font-size="10.2" fill="#414141" text-anchor="start" stroke="#414141" stroke-width="0.22" textLength="9.80" lengthAdjust="spacingAndGlyphs">KT</text>
<rect x="864.50" y="499.76" width="43.50" height="21.30" rx="3" fill="#fdfdfd" stroke="#d9d6d6" stroke-width="1"/>
<path d="M898.55 508.51 L901.80 512.01 L905.05 508.51" fill="none" stroke="#5a5a5a" stroke-width="1"/>
<rect x="924.00" y="505.26" width="4.8" height="8" fill="#3a8ff0"/>
<path d="M927.40 506.26 h3.4 l2.3 2.3 v6.8 h-5.7 z" fill="#9ac8f7"/>
<path d="M928.20 509.86 h4 M928.20 511.46 h4 M928.20 513.06 h4" stroke="#5a9de8" stroke-width="0.9"/>
<circle cx="954.50" cy="510.36" r="4.20" fill="none" stroke="#3d97f0" stroke-width="1.5" stroke-dasharray="6.6 2.2" transform="rotate(-116 954.50 510.36)"/>
<circle cx="958.14" cy="508.26" r="1.05" fill="#2f8ef0"/>
<circle cx="953.92" cy="514.52" r="1.05" fill="#2f8ef0"/>
<rect x="971.50" y="499.01" width="158.00" height="23.00" rx="3" fill="#fdfdfd" stroke="#d9d6d6" stroke-width="1"/>
<path d="M1154.20 506.46 h8 v1.3 h-8 z M1156.80 505.26 h2.8 v1.3 h-2.8 z" fill="#c8332b"/>
<path d="M1155.10 507.76 h6.3 v6.4 q0 0.5 -0.5 0.5 h-5.3 q-0.5 0 -0.5 -0.5 z" fill="#d2362c"/>
<path d="M1156.35 509.26 L1160.15 513.06 M1160.15 509.26 L1156.35 513.06" stroke="#fff" stroke-width="1"/>
<text x="79.60" y="546.73" font-size="10" fill="#414141" text-anchor="end" stroke="#414141" stroke-width="0.22" textLength="27.60" lengthAdjust="spacingAndGlyphs">45643</text>
<text x="87.90" y="546.73" font-size="10" fill="#414141" text-anchor="start" stroke="#414141" stroke-width="0.22" textLength="33.10" lengthAdjust="spacingAndGlyphs">301255</text>
<text x="156.30" y="546.73" font-size="10" fill="#414141" text-anchor="start" stroke="#414141" stroke-width="0.22" textLength="160.00" lengthAdjust="spacingAndGlyphs">Rotbäckchen Adventskalender 2024</text>
<rect x="415.50" y="532.73" width="66.00" height="21.30" rx="3" fill="#fdfdfd" stroke="#d9d6d6" stroke-width="1"/>
<path d="M472.35 541.48 L475.60 544.98 L478.85 541.48" fill="none" stroke="#5a5a5a" stroke-width="1"/>
<rect x="543.50" y="540.23" width="8.00" height="7.50" rx="2" fill="#fff" stroke="#7a7a7a" stroke-width="1"/>
<rect x="571.50" y="532.73" width="54.00" height="21.30" rx="3" fill="#fdfdfd" stroke="#d9d6d6" stroke-width="1"/>
<text x="623.30" y="546.73" font-size="10" fill="#414141" text-anchor="end" stroke="#414141" stroke-width="0.22" textLength="25.25" lengthAdjust="spacingAndGlyphs">25,57</text>
<rect x="635.50" y="532.73" width="54.00" height="21.30" rx="3" fill="#fdfdfd" stroke="#d9d6d6" stroke-width="1"/>
<rect x="704.50" y="532.73" width="117.00" height="21.30" rx="3" fill="#fdfdfd" stroke="#d9d6d6" stroke-width="1"/>
<text x="840.40" y="546.93" font-size="10.2" fill="#414141" text-anchor="start" stroke="#414141" stroke-width="0.22" textLength="9.80" lengthAdjust="spacingAndGlyphs">KT</text>
<rect x="864.50" y="532.73" width="43.50" height="21.30" rx="3" fill="#fdfdfd" stroke="#d9d6d6" stroke-width="1"/>
<path d="M898.55 541.48 L901.80 544.98 L905.05 541.48" fill="none" stroke="#5a5a5a" stroke-width="1"/>
<rect x="924.00" y="538.23" width="4.8" height="8" fill="#3a8ff0"/>
<path d="M927.40 539.23 h3.4 l2.3 2.3 v6.8 h-5.7 z" fill="#9ac8f7"/>
<path d="M928.20 542.83 h4 M928.20 544.43 h4 M928.20 546.03 h4" stroke="#5a9de8" stroke-width="0.9"/>
<circle cx="954.50" cy="543.33" r="4.20" fill="none" stroke="#3d97f0" stroke-width="1.5" stroke-dasharray="6.6 2.2" transform="rotate(-116 954.50 543.33)"/>
<circle cx="958.14" cy="541.23" r="1.05" fill="#2f8ef0"/>
<circle cx="953.92" cy="547.49" r="1.05" fill="#2f8ef0"/>
<rect x="971.50" y="531.98" width="158.00" height="23.00" rx="3" fill="#fdfdfd" stroke="#d9d6d6" stroke-width="1"/>
<path d="M1154.20 539.43 h8 v1.3 h-8 z M1156.80 538.23 h2.8 v1.3 h-2.8 z" fill="#c8332b"/>
<path d="M1155.10 540.73 h6.3 v6.4 q0 0.5 -0.5 0.5 h-5.3 q-0.5 0 -0.5 -0.5 z" fill="#d2362c"/>
<path d="M1156.35 542.23 L1160.15 546.03 M1160.15 542.23 L1156.35 546.03" stroke="#fff" stroke-width="1"/>
<rect x="415.50" y="565.70" width="66.00" height="21.30" rx="3" fill="#fdfdfd" stroke="#d9d6d6" stroke-width="1"/>
<path d="M472.35 574.45 L475.60 577.95 L478.85 574.45" fill="none" stroke="#5a5a5a" stroke-width="1"/>
<rect x="543.50" y="573.20" width="8.00" height="7.50" rx="2" fill="#fff" stroke="#7a7a7a" stroke-width="1"/>
<rect x="571.50" y="565.70" width="54.00" height="21.30" rx="3" fill="#fdfdfd" stroke="#d9d6d6" stroke-width="1"/>
<rect x="635.50" y="565.70" width="54.00" height="21.30" rx="3" fill="#fdfdfd" stroke="#d9d6d6" stroke-width="1"/>
<rect x="704.50" y="565.70" width="117.00" height="21.30" rx="3" fill="#fdfdfd" stroke="#d9d6d6" stroke-width="1"/>
<text x="840.40" y="579.90" font-size="10.2" fill="#414141" text-anchor="start" stroke="#414141" stroke-width="0.22" textLength="9.80" lengthAdjust="spacingAndGlyphs">KT</text>
<rect x="864.50" y="565.70" width="43.50" height="21.30" rx="3" fill="#fdfdfd" stroke="#d9d6d6" stroke-width="1"/>
<path d="M898.55 574.45 L901.80 577.95 L905.05 574.45" fill="none" stroke="#5a5a5a" stroke-width="1"/>
<rect x="924.00" y="571.20" width="4.8" height="8" fill="#3a8ff0"/>
<path d="M927.40 572.20 h3.4 l2.3 2.3 v6.8 h-5.7 z" fill="#9ac8f7"/>
<path d="M928.20 575.80 h4 M928.20 577.40 h4 M928.20 579.00 h4" stroke="#5a9de8" stroke-width="0.9"/>
<circle cx="954.50" cy="576.30" r="4.20" fill="none" stroke="#3d97f0" stroke-width="1.5" stroke-dasharray="6.6 2.2" transform="rotate(-116 954.50 576.30)"/>
<circle cx="958.14" cy="574.20" r="1.05" fill="#2f8ef0"/>
<circle cx="953.92" cy="580.46" r="1.05" fill="#2f8ef0"/>
<rect x="971.50" y="564.95" width="158.00" height="23.00" rx="3" fill="#fdfdfd" stroke="#d9d6d6" stroke-width="1"/>
<path d="M1154.20 572.40 h8 v1.3 h-8 z M1156.80 571.20 h2.8 v1.3 h-2.8 z" fill="#c8332b"/>
<path d="M1155.10 573.70 h6.3 v6.4 q0 0.5 -0.5 0.5 h-5.3 q-0.5 0 -0.5 -0.5 z" fill="#d2362c"/>
<path d="M1156.35 575.20 L1160.15 579.00 M1160.15 575.20 L1156.35 579.00" stroke="#fff" stroke-width="1"/>
</svg>
</body></html>
